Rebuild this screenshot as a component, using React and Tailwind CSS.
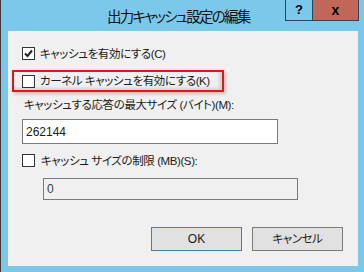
import React from 'react';

const FONT = { fontFamily: '"Liberation Sans", "Noto Sans CJK JP", sans-serif', fontFeatureSettings: '"palt"' };

const CheckBox = ({ checked }) => (
  <span className="flex h-[13px] w-[13px] shrink-0 items-center justify-center border border-[#333333] bg-white">
    {checked && (
      <svg width="9" height="9" viewBox="0 0 9 9">
        <path d="M1 4.5 L3.5 7 L8 1.5" fill="none" stroke="#222" strokeWidth="2" />
      </svg>
    )}
  </span>
);

const App = () => {
  return (
    <div className="flex h-[272px] w-[364px] flex-col overflow-hidden border-l border-[#3a3a3a] bg-[#7bc8ea] text-[#1b1b1b]" style={FONT}>
      {/* title bar */}
      <div className="flex h-[31px] shrink-0 items-start">
        <div className="ml-[106px] mt-[7px] whitespace-nowrap text-[14.5px] leading-[20px] tracking-[-1.75px] text-[#111]">出力キャッシュ設定の編集</div>
        <div className="ml-auto mr-[5px] flex">
          <div className="flex h-[21px] w-[28px] items-center justify-center border border-t-0 border-[#2d4656] text-[13px] font-bold text-black">?</div>
          <div className="flex h-[21px] w-[46px] items-center justify-center border border-l-0 border-t-0 border-[#2d4656] bg-[#c1675a] text-[14px] font-bold text-black">x</div>
        </div>
      </div>

      {/* client area */}
      <div className="ml-[7px] flex h-[235px] w-[350px] flex-col whitespace-nowrap bg-[#f0f0f0] text-[11.5px] leading-[16px] tracking-[-0.4px]">
        <label className="ml-[14px] mt-[16px] flex h-[13px] items-center gap-[5px]">
          <CheckBox checked />
          <span>キャッシュを有効にする(C)</span>
        </label>

        <div className="ml-[4px] mt-[10px] flex h-[22px] w-[212px] items-center border-2 border-[#ee1111] pl-[8px] shadow-[inset_-3px_-2px_3px_rgba(0,0,0,0.12),2px_2px_3px_rgba(0,0,0,0.2)]">
          <label className="flex items-center gap-[5px]">
            <CheckBox />
            <span>カーネル キャッシュを有効にする(K)</span>
          </label>
        </div>

        <div className="ml-[16px] mt-[5px]">キャッシュする応答の最大サイズ (バイト)(M):</div>
        <div className="ml-[14px] mt-[6px] flex h-[25px] w-[256px] items-center border border-[#7a7a7a] bg-white pl-[3px] text-[12px] tracking-normal">262144</div>

        <label className="ml-[14px] mt-[10px] flex h-[13px] items-center gap-[6px]">
          <CheckBox />
          <span>キャッシュ サイズの制限 (MB)(S):</span>
        </label>
        <div className="ml-[35px] mt-[11px] flex h-[22px] w-[255px] items-center border border-[#7a7a7a] pl-[3px] text-[12px] tracking-normal text-[#3b3b3b]">0</div>

        <div className="ml-[143px] mt-[27px] flex gap-[10px]">
          <button className="h-[24px] w-[91px] border border-[#4a7cab] bg-[#e1e1e1] text-[12px] tracking-normal">OK</button>
          <button className="h-[24px] w-[91px] border border-[#7a7a7a] bg-[#e1e1e1] text-[11.5px]">キャンセル</button>
        </div>
      </div>
    </div>
  );
};

export default App;
